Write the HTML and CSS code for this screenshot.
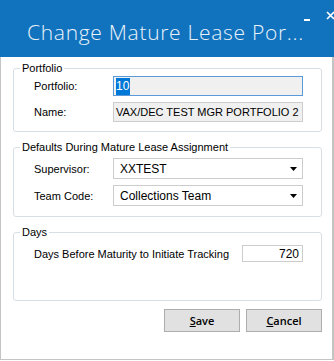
FILE: index.html
```html
<!DOCTYPE html>
<html lang="en">
<head>
    <meta charset="UTF-8">
    <title>Change Mature Lease Portfolio</title>
    <link rel="stylesheet" href="styles.css">
</head>
<body>
<div class="window">
    <div class="titlebar">
        <div class="title">Change Mature Lease Por...</div>
        <div class="title-buttons">
            <svg class="btn-min" width="6" height="2" viewBox="0 0 6 2"><rect width="6" height="2" fill="#fff"/></svg>
            <svg class="btn-close" width="9" height="9" viewBox="0 0 9 9"><path d="M1 1L8 8M8 1L1 8" stroke="#fff" stroke-width="1.6"/></svg>
        </div>
    </div>

    <div class="content">
        <fieldset class="group group-portfolio">
            <legend>Portfolio</legend>
            <div class="row">
                <label>Portfolio:</label>
                <div class="field field-focus"><span class="selected">10</span></div>
            </div>
            <div class="row">
                <label>Name:</label>
                <div class="field field-readonly">VAX/DEC TEST MGR PORTFOLIO 2</div>
            </div>
        </fieldset>

        <fieldset class="group group-defaults">
            <legend>Defaults During Mature Lease Assignment</legend>
            <div class="row">
                <label>Supervisor:</label>
                <div class="combo">
                    <span>XXTEST</span>
                    <svg width="7" height="4" viewBox="0 0 7 4"><path d="M0 0H7L3.5 4Z" fill="#000"/></svg>
                </div>
            </div>
            <div class="row">
                <label>Team Code:</label>
                <div class="combo">
                    <span>Collections Team</span>
                    <svg width="7" height="4" viewBox="0 0 7 4"><path d="M0 0H7L3.5 4Z" fill="#000"/></svg>
                </div>
            </div>
        </fieldset>

        <fieldset class="group group-days">
            <legend>Days</legend>
            <div class="row row-days">
                <label>Days Before Maturity to Initiate Tracking</label>
                <div class="field field-number">720</div>
            </div>
        </fieldset>

        <div class="actions">
            <button><u>S</u>ave</button>
            <button><u>C</u>ancel</button>
        </div>
    </div>
</div>
</body>
</html>
```

FILE: styles.css
```css
/* dialog window */
body {
    margin: 0;
    font-family: "Liberation Sans", Arial, sans-serif;
    font-size: 11px;
    color: #000;
    background-color: #fff;
}
.window {
    width: 334px;
    height: 360px;
    box-sizing: border-box;
    border: 1px solid #c4c4c4;
    border-top: none;
    border-right-width: 2px;
}
.titlebar {
    height: 57px;
    margin: 0 -2px 0 -1px;
    background-color: #1172be;
    display: flex;
    justify-content: space-between;
}
.title {
    font-family: "Open Sans", sans-serif;
    font-weight: 300;
    font-size: 21px;
    letter-spacing: 0.7px;
    color: #eaf2fa;
    padding: 18px 0 0 27px;
    white-space: nowrap;
}
.title-buttons {
    display: flex;
    align-items: flex-start;
    padding: 11px 14px 0 0;
    gap: 16px;
}
.btn-min {
    margin-top: 8px;
}
.content {
    padding: 5px 12px 0 12px;
}
.group {
    margin: 0 0 9px 0;
    width: 309px;
    box-sizing: border-box;
    border: 1px solid #d7dfe6;
    border-radius: 3px;
    padding: 0 18px 0 20px;
}
.group legend {
    padding: 0 2px;
    margin-left: -14px;
    line-height: 13px;
}
.group-portfolio {
    padding-top: 1px;
    padding-bottom: 9px;
}
.group-defaults {
    padding-top: 4px;
    padding-bottom: 10px;
}
.group-days {
    height: 75px;
    padding-top: 6px;
}
.row {
    display: flex;
    align-items: center;
}
.row + .row {
    margin-top: 6px;
}
.row label {
    width: 79px;
}
.row-days {
    justify-content: space-between;
}
.row-days label {
    width: auto;
}
.field {
    flex: 1;
    height: 20px;
    box-sizing: border-box;
    border: 1px solid #cccccc;
    padding: 0 2px;
    display: flex;
    align-items: center;
}
.field-focus {
    background-color: #f0f0f0;
    border-color: #5b9ad8;
}
.field-readonly {
    background-color: #f0f0f0;
}
.selected {
    background-color: #0078d7;
    color: #fff;
    padding: 1px 1px 2px 0;
    font-size: 12px;
}
.field-number {
    flex: none;
    width: 61px;
    height: 17px;
    justify-content: flex-end;
    padding-right: 3px;
    font-size: 12px;
}
.combo {
    flex: 1;
    height: 21px;
    box-sizing: border-box;
    border: 1px solid #cccccc;
    padding: 0 5px 0 6px;
    display: flex;
    align-items: center;
    justify-content: space-between;
    font-size: 12px;
}
.actions {
    display: flex;
    justify-content: flex-end;
    gap: 6px;
    width: 309px;
    margin-top: -1px;
}
.actions button {
    width: 76px;
    height: 23px;
    background-color: #e1e1e1;
    border: 1px solid #adadad;
    font-family: "Open Sans", sans-serif;
    font-weight: 600;
    font-size: 11px;
    color: #000;
    padding: 0;
}
```
